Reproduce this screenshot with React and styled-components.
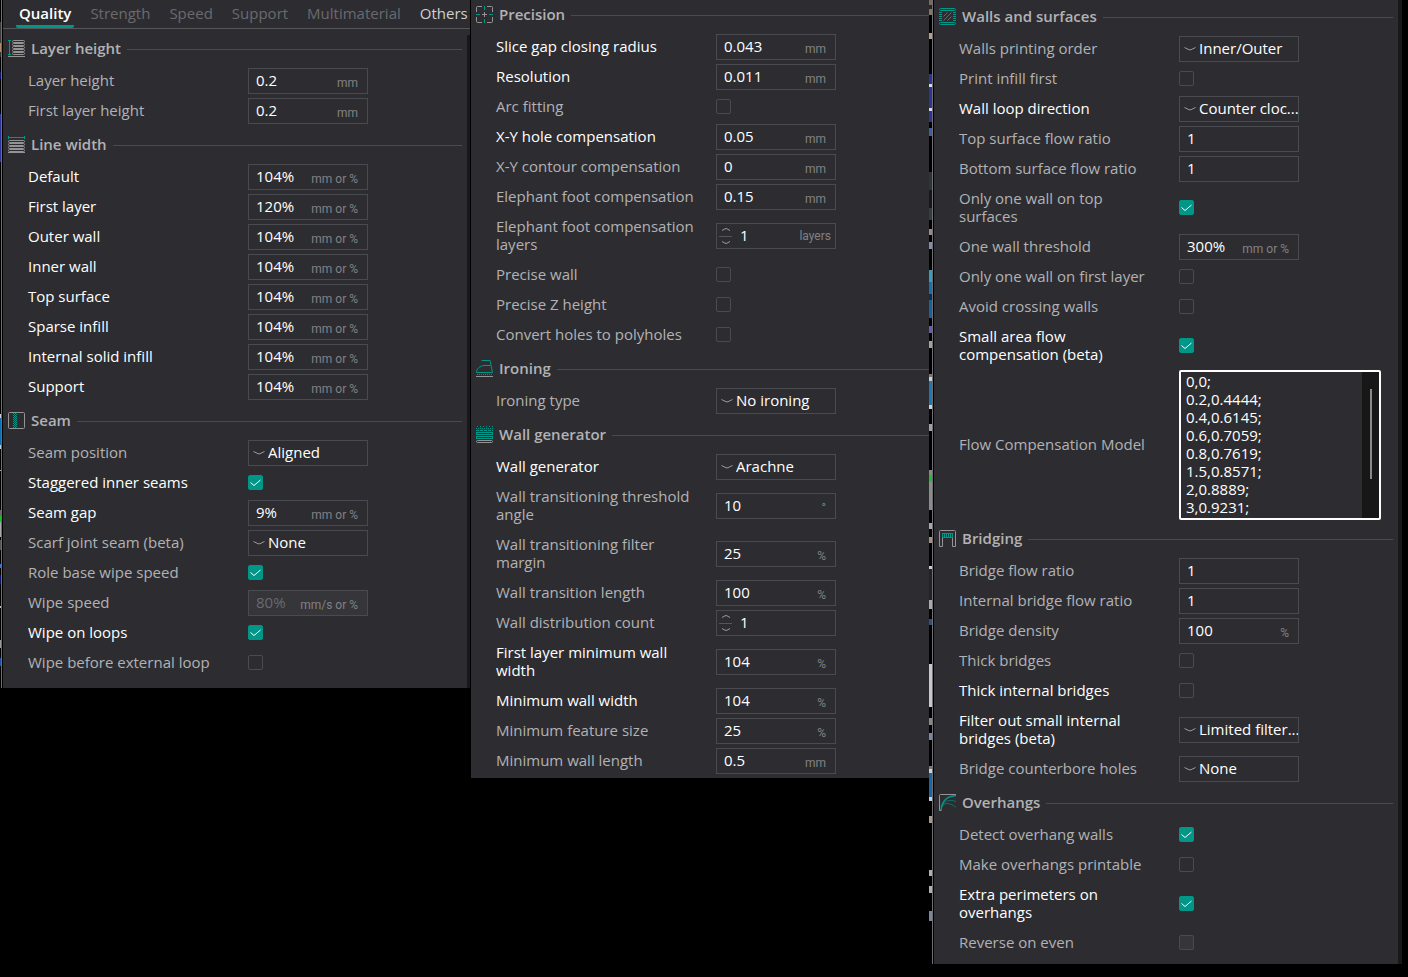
import React, { useId } from "react";
import styled, { createGlobalStyle, css } from "styled-components";

const c = {
  panel: "#2d2d31",
  line: "#4a4a51",
  label: "#b2b2b5",
  strong: "#ffffff",
  unit: "#818183",
  faint: "#6a6a6e",
  teal: "#009688",
  track: "#18181a",
  icon: "#949494",
};

const Global = createGlobalStyle`
  * { box-sizing: border-box; }
  body { margin: 0; background: #000; }
  body, button, input, select, textarea {
    font-family: "Open Sans", "Noto Sans", sans-serif;
    font-size: 15px;
    line-height: 18px;
  }
`;

const Page = styled.main`
  display: grid;
  grid-template-columns: 3px minmax(0, 467fr) 1px minmax(0, 458fr) 5px minmax(0, 468fr) 6px;
  align-items: start;
  overflow: hidden;
`;

const Gutter = styled.div`
  display: flex;
  align-self: stretch;
`;
const Backdrop = styled.div`
  flex: 1;
  background: linear-gradient(to bottom, ${(p) => p.$stops});
`;
const WindowEdge = styled.div`
  width: 1px;
  height: ${(p) => p.$height}px;
  margin-right: 1px;
  background: #707074;
`;
const Divider = styled.div``;

const Panel = styled.section`
  display: flex;
  flex-direction: column;
  background: ${c.panel};
  overflow: hidden;
`;
const TabBar = styled.nav`
  display: flex;
  gap: 13px;
  height: 29px;
  padding-left: 13px;
  border-bottom: 1px solid #55555a;
  overflow: hidden;
`;
const Tab = styled.button`
  flex: none;
  height: 28px;
  padding: 4px 3px 3px;
  border: 0;
  border-bottom: 3px solid ${(p) => (p.$active ? c.teal : "transparent")};
  border-radius: 2px;
  background: none;
  color: ${(p) => (p.$active ? "#fff" : p.$lit ? "#d0d0d2" : c.faint)};
  font-weight: ${(p) => (p.$active ? 600 : 400)};
`;
const Body = styled.div`
  display: flex;
  padding-top: ${(p) => p.$top}px;
`;
const Settings = styled.div`
  flex: 1;
  min-width: 0;
  padding-bottom: ${(p) => p.$bottom}px;
`;
const ScrollTrack = styled.div`
  width: ${(p) => p.$width}px;
  margin-top: ${(p) => p.$top}px;
  background: ${c.track};
`;

const GroupHeader = styled.header`
  display: flex;
  align-items: center;
  height: 31px;
  margin: ${(p) => p.$top}px ${(p) => p.$right}px 1px 5px;
  gap: 6px;
`;
const GroupTitle = styled.h2`
  margin: 0;
  padding-bottom: 3px;
  font-size: 15px;
  line-height: 18px;
  font-weight: 600;
  color: ${c.label};
  white-space: nowrap;
`;
const Rule = styled.span`
  flex: 1;
  height: 1px;
  background: ${c.line};
`;
const Icon = styled.svg.attrs({ width: 17, height: 17, viewBox: "0 0 17 17", fill: "none", "aria-hidden": true })`
  flex: none;
  margin-bottom: 2px;
`;

const Row = styled.div`
  display: grid;
  grid-template-columns: 220px minmax(0, 1fr);
  align-items: center;
  min-height: 30px;
  padding-left: 25px;
`;
const Label = styled.label`
  padding: 5px 18px 7px 0;
  color: ${(p) => (p.$strong ? c.strong : c.label)};
`;

const Box = styled.div`
  display: flex;
  align-items: center;
  width: 120px;
  height: 26px;
  border: 1px solid ${c.line};
  background: ${(p) => (p.$off ? "#35353a" : c.panel)};
`;
const TextInput = styled.input`
  flex: 1;
  min-width: 0;
  height: 24px;
  padding: 0 0 2px ${(p) => p.$inset}px;
  border: 0;
  outline: 0;
  background: none;
  color: #fff;
  &:disabled { color: ${c.faint}; }
`;
const Unit = styled.span`
  padding: ${(p) => (p.$spin ? "0 4px 0 0" : "3px 9px 0 0")};
  font-family: Roboto, sans-serif;
  font-size: 12px;
  color: ${c.unit};
  white-space: nowrap;
`;

const stacked = css`
  display: grid;
  align-items: center;
  > * { grid-area: 1 / 1; }
  > svg { pointer-events: none; }
`;
const SelectBox = styled.div`
  ${stacked}
  width: 120px;
  height: 26px;
  > svg { margin-left: 5px; }
`;
const Select = styled.select`
  width: 100%;
  min-width: 0;
  height: 26px;
  padding: 0 0 2px 19px;
  appearance: none;
  border: 1px solid ${c.line};
  border-radius: 0;
  outline: 0;
  background: ${c.panel};
  color: #fff;
  line-height: normal;
  white-space: nowrap;
`;
const CheckBox = styled.span`
  ${stacked}
  width: 15px;
  height: 15px;
  margin-bottom: 1px;
`;
const CheckInput = styled.input`
  width: 15px;
  height: 15px;
  margin: 0;
  appearance: none;
  border: 1px solid ${c.line};
  border-radius: 2px;
  &:checked { background: ${c.teal}; border-color: ${c.teal}; }
  &:disabled { background: #35353a; }
`;
const ModelBox = styled.div`
  display: flex;
  width: 202px;
  height: 150px;
  border: 2px solid #fff;
  border-radius: 2px;
`;
const ModelText = styled.textarea`
  flex: 1;
  min-width: 0;
  padding: 0 5px;
  border: 0;
  outline: 0;
  resize: none;
  overflow: hidden;
  background: ${c.panel};
  color: #fff;
`;
const ModelTrack = styled.div`
  width: 17px;
  padding: 17px 7px 0 8px;
  background: #171717;
`;
const ModelThumb = styled.div`
  height: 90px;
  background: #8a8a8a;
`;

const g = c.icon;
const t = c.teal;
const icons = {
  layer: (
    <Icon>
      <path d="M0 .5h3M1.5 .5v14M0 14.5h3" stroke={t} />
      {[0.5, 3.5, 6.5, 9.5, 12.5].map((y) => (
        <rect key={y} x="4.5" y={y} width="12" height="2" rx="1" stroke={g} />
      ))}
      <path d="M0 16.5h17" stroke={g} />
    </Icon>
  ),
  line: (
    <Icon>
      <path d="M.5 0v3M16.5 0v3M0 1.5h17" stroke={t} />
      {[4.5, 7.5, 10.5, 13.5].map((y) => (
        <rect key={y} x=".5" y={y} width="16" height="2" rx="1" stroke={g} />
      ))}
      <path d="M0 16.5h17" stroke={g} />
    </Icon>
  ),
  seam: (
    <Icon>
      <rect x=".5" y=".5" width="16" height="16" rx="1" stroke={g} />
      <path d="M5.5 1v15M7.5 1v15" stroke={t} strokeDasharray="1 1" />
      <path d="M6.5 2v14M8.5 2v14" stroke={t} strokeDasharray="1 1" />
    </Icon>
  ),
  precision: (
    <Icon>
      <path d="M6 .5H1.5a1 1 0 0 0-1 1V6M11 .5h4.500a1 1 0 0 1 1 1V6M.5 11v4.500a1 1 0 0 0 1 1H6M16.500 11v4.500a1 1 0 0 1-1 1H11M6 8.500h5M8.500 6v5" stroke={g} />
      <path d="M8.500 0v4M8.500 13v4M0 8.500h4M13 8.500h4" stroke={t} />
    </Icon>
  ),
  iron: (
    <Icon>
      <path d="M5.500 .5h8.500l2.500 12H.5C.5 8.500 4 6 8 5.500h6.500" stroke={t} />
      <path d="M1 14.500h16" stroke={t} strokeDasharray="1 1" />
      <path d="M0 16.500h17" stroke={g} />
    </Icon>
  ),
  wall: (
    <Icon>
      <path d="M1 .5h16" stroke={t} strokeDasharray="1 2" />
      <path d="M0 2.500h17" stroke={t} strokeDasharray="1 1" />
      <path d="M0 4.500h17" stroke={t} strokeDasharray="3 1" />
      <rect x=".5" y="6.500" width="16" height="2" stroke={t} />
      <rect x=".5" y="10.500" width="16" height="2" stroke={t} />
      <rect x=".5" y="14.500" width="16" height="2" rx="1" stroke={g} />
    </Icon>
  ),
  surfaces: (
    <Icon>
      <rect x=".5" y=".5" width="16" height="2" rx="1" stroke={t} />
      <rect x=".5" y="14.500" width="16" height="2" rx="1" stroke={t} />
      <path d="M1.500 4v10M15.500 4v10" stroke={t} strokeWidth="3" strokeDasharray="1 1" />
      <path d="M4.500 8.500l4-4M4.500 12.500l8-8M8.500 12.500l4-4" stroke={t} />
    </Icon>
  ),
  bridge: (
    <Icon>
      <path d="M.5 16.500v-15a1 1 0 0 1 1-1h14a1 1 0 0 1 1 1v15h-3V7.500h-10v9z" stroke={g} />
      <path d="M3 3.500h11M3 7.500h11M3.500 3v5M5.500 3v5M7.500 3v5M9.500 3v5M11.500 3v5M13.500 3v5" stroke={t} />
    </Icon>
  ),
  overhang: (
    <Icon>
      <path d="M17 .5H1.500a1 1 0 0 0-1 1v15h2" stroke={g} />
      <path d="M2 16C3 7 8 2 17 1.500" stroke={t} strokeWidth="1.500" />
      <path d="M3 13C5 7 10 5 17 7.500M4 11C8 8 13 10 17 13.500" stroke={t} opacity=".6" />
    </Icon>
  ),
};

const Chevron = () => (
  <svg width="12" height="6" viewBox="0 0 12 6" fill="none" aria-hidden="true">
    <path d="M.5 1.500l4.500 2.200q1 .4 2 0l4.500-2.200" stroke="#9a9a9d" />
  </svg>
);
const Tick = () => (
  <svg width="15" height="15" viewBox="0 0 15 15" fill="none" aria-hidden="true">
    <path d="M2.500 7.500l3.500 3 6.500-5.500" stroke="#fff" />
  </svg>
);
const SpinArrows = () => (
  <svg width="19" height="24" viewBox="0 0 19 24" fill="none" aria-hidden="true">
    <path d="M2 12.500h13" stroke="#55555a" />
    <path d="M5 6.500l3-1.700q1-.4 2 0l3 1.700M5 17.500l3 1.700q1 .4 2 0l3-1.700" stroke="#9a9a9d" />
  </svg>
);

/* Field builders: a leading "!" on a label marks a value changed from its preset. */
const text = (label, value, unit, off) => ({ kind: "text", label, value, unit, off });
const pick = (label, value) => ({ kind: "pick", label, value });
const check = (label, on, off) => ({ kind: "check", label, on, off });
const spin = (label, value, unit) => ({ kind: "spin", label, value, unit });
const model = (label, value) => ({ kind: "model", label, value });

const mmPct = "mm or %";
const quality = [
  { title: "Layer height", icon: "layer", fields: [text("Layer height", "0.2", "mm"), text("First layer height", "0.2", "mm")] },
  {
    title: "Line width",
    icon: "line",
    fields: [
      text("!Default", "104%", mmPct),
      text("!First layer", "120%", mmPct),
      text("!Outer wall", "104%", mmPct),
      text("!Inner wall", "104%", mmPct),
      text("!Top surface", "104%", mmPct),
      text("!Sparse infill", "104%", mmPct),
      text("!Internal solid infill", "104%", mmPct),
      text("!Support", "104%", mmPct),
    ],
  },
  {
    title: "Seam",
    icon: "seam",
    fields: [
      pick("Seam position", "Aligned"),
      check("!Staggered inner seams", true),
      text("!Seam gap", "9%", mmPct),
      pick("Scarf joint seam (beta)", "None"),
      check("Role base wipe speed", true),
      text("Wipe speed", "80%", "mm/s or %", true),
      check("!Wipe on loops", true),
      check("Wipe before external loop", false),
    ],
  },
];
const precision = [
  {
    title: "Precision",
    icon: "precision",
    fields: [
      text("!Slice gap closing radius", "0.043", "mm"),
      text("!Resolution", "0.011", "mm"),
      check("Arc fitting", false),
      text("!X-Y hole compensation", "0.05", "mm"),
      text("X-Y contour compensation", "0", "mm"),
      text("Elephant foot compensation", "0.15", "mm"),
      spin("Elephant foot compensation layers", "1", "layers"),
      check("Precise wall", false),
      check("Precise Z height", false),
      check("Convert holes to polyholes", false),
    ],
  },
  { title: "Ironing", icon: "iron", fields: [pick("Ironing type", "No ironing")] },
  {
    title: "Wall generator",
    icon: "wall",
    fields: [
      pick("!Wall generator", "Arachne"),
      text("Wall transitioning threshold angle", "10", "°"),
      text("Wall transitioning filter margin", "25", "%"),
      text("Wall transition length", "100", "%"),
      spin("Wall distribution count", "1"),
      text("!First layer minimum wall width", "104", "%"),
      text("!Minimum wall width", "104", "%"),
      text("Minimum feature size", "25", "%"),
      text("Minimum wall length", "0.5", "mm"),
    ],
  },
];
const walls = [
  {
    title: "Walls and surfaces",
    icon: "surfaces",
    fields: [
      pick("Walls printing order", "Inner/Outer"),
      check("Print infill first", false),
      pick("!Wall loop direction", "Counter cloc..."),
      text("Top surface flow ratio", "1"),
      text("Bottom surface flow ratio", "1"),
      check("Only one wall on top surfaces", true),
      text("One wall threshold", "300%", mmPct),
      check("Only one wall on first layer", false),
      check("Avoid crossing walls", false),
      check("!Small area flow compensation (beta)", true),
      model(
        "Flow Compensation Model",
        "0,0;\n0.2,0.4444;\n0.4,0.6145;\n0.6,0.7059;\n0.8,0.7619;\n1.5,0.8571;\n2,0.8889;\n3,0.9231;"
      ),
    ],
  },
  {
    title: "Bridging",
    icon: "bridge",
    fields: [
      text("Bridge flow ratio", "1"),
      text("Internal bridge flow ratio", "1"),
      text("Bridge density", "100", "%"),
      check("Thick bridges", false),
      check("!Thick internal bridges", false),
      pick("!Filter out small internal bridges (beta)", "Limited filter..."),
      pick("Bridge counterbore holes", "None"),
    ],
  },
  {
    title: "Overhangs",
    icon: "overhang",
    fields: [
      check("Detect overhang walls", true),
      check("Make overhangs printable", false),
      check("!Extra perimeters on overhangs", true),
      check("Reverse on even", false, true),
    ],
  },
];

function Control({ field, id }) {
  const { kind, value, unit, on, off } = field;
  if (kind === "pick")
    return (
      <SelectBox>
        <Select id={id} defaultValue={value}>
          <option>{value}</option>
        </Select>
        <Chevron />
      </SelectBox>
    );
  if (kind === "check")
    return (
      <CheckBox>
        <CheckInput id={id} type="checkbox" defaultChecked={on} disabled={off} />
        {on && <Tick />}
      </CheckBox>
    );
  if (kind === "model")
    return (
      <ModelBox>
        <ModelText id={id} defaultValue={value} spellCheck={false} />
        <ModelTrack>
          <ModelThumb />
        </ModelTrack>
      </ModelBox>
    );
  const isSpin = kind === "spin";
  return (
    <Box $off={off}>
      {isSpin && <SpinArrows />}
      <TextInput id={id} type="text" defaultValue={value} disabled={off} $inset={isSpin ? 4 : 7} />
      {unit && <Unit $spin={isSpin}>{unit}</Unit>}
    </Box>
  );
}

function Field({ field }) {
  const id = useId();
  const strong = field.label.startsWith("!");
  return (
    <Row>
      <Label htmlFor={id} $strong={strong}>
        {strong ? field.label.slice(1) : field.label}
      </Label>
      <Control field={field} id={id} />
    </Row>
  );
}

function Groups({ groups, firstTop, right, bottom }) {
  return (
    <Settings $bottom={bottom}>
      {groups.map((group, i) => (
        <React.Fragment key={group.title}>
          <GroupHeader $top={i ? 4 : firstTop} $right={right}>
            {icons[group.icon]}
            <GroupTitle>{group.title}</GroupTitle>
            <Rule />
          </GroupHeader>
          {group.fields.map((f) => (
            <Field key={f.label} field={f} />
          ))}
        </React.Fragment>
      ))}
    </Settings>
  );
}

/* Desktop visible between the windows: [from, to, colour] bands on black. */
const stops = (bands) => {
  let out = ["#000 0"];
  bands.forEach(([a, b, col]) => out.push(`#000 ${a}px`, `${col} ${a}px`, `${col} ${b}px`, `#000 ${b}px`));
  return out.join(", ");
};
const leftDesktop = [
  [22, 43, "#3a3a3a"], [43, 52, "#b58a60"], [52, 57, "#333"], [72, 79, "#10106a"], [114, 162, "#2c349a"],
  [414, 418, "#ccc"], [418, 445, "#0d6cb0"], [445, 449, "#ccc"], [470, 471, "#aaa"], [510, 516, "#666"],
  [516, 522, "#18c428"], [522, 537, "#aaa"], [540, 550, "#555"], [564, 568, "#3b6fd0"], [575, 584, "#10106a"],
  [606, 608, "#bbb"], [640, 648, "#999"], [658, 666, "#1a50a0"],
];
const midDesktop = [
  [0, 5, "#7a6a5c"], [5, 9, "#2a2622"], [9, 15, "#8a7460"], [33, 39, "#b8a080"], [74, 84, "#2c349a"], [84, 87, "#d8d8f0"],
  [87, 108, "#2c349a"], [108, 111, "#d8d8f0"], [111, 122, "#2c349a"], [128, 136, "#3a60a8"], [172, 190, "#2c3438"],
  [190, 208, "#15181a"], [208, 220, "#343c42"], [229, 235, "#9a8a80"], [242, 249, "#8090a8"], [270, 282, "#2aa3c0"],
  [282, 294, "#0e74b4"], [294, 300, "#0a2c50"], [300, 318, "#0e64a4"], [326, 333, "#6a5ab0"], [341, 348, "#a8a090"],
  [374, 377, "#777"], [377, 381, "#d0d0d0"], [381, 405, "#1878b8"], [405, 409, "#d0d0d0"], [424, 431, "#a0a0a8"],
  [470, 475, "#888"], [475, 482, "#18c428"], [482, 510, "#8c8c8c"], [523, 529, "#a8a8a8"], [537, 543, "#a89080"],
  [566, 569, "#ccc"], [569, 600, "#222"], [600, 609, "#aaa"], [619, 625, "#28508a"], [664, 707, "#c8c8c8"],
  [718, 725, "#888"], [733, 740, "#7888a8"], [766, 769, "#777"], [769, 773, "#d0d0d0"], [773, 797, "#1268ac"],
  [797, 801, "#d0d0d0"], [816, 823, "#a89888"], [870, 876, "#b0b0b0"], [886, 893, "#b0b0b0"], [911, 921, "#7888a0"],
];

export default function App() {
  return (
    <>
      <Global />
      <Page>
        <Gutter>
          <Backdrop $stops={stops(leftDesktop)} />
          <WindowEdge $height={688} />
        </Gutter>
        <Panel>
          <TabBar>
            <Tab type="button" $active>Quality</Tab>
            <Tab type="button">Strength</Tab>
            <Tab type="button">Speed</Tab>
            <Tab type="button">Support</Tab>
            <Tab type="button">Multimaterial</Tab>
            <Tab type="button" $lit>Others</Tab>
          </TabBar>
          <Body $top={1}>
            <Groups groups={quality} firstTop={4} right={5} bottom={10} />
            <ScrollTrack $width={3} $top={5} />
          </Body>
        </Panel>
        <Divider />
        <Panel>
          <Body $top={0}>
            <Groups groups={precision} firstTop={0} right={0} bottom={2} />
          </Body>
        </Panel>
        <Gutter>
          <Backdrop $stops={stops(midDesktop)} />
          <WindowEdge $height={964} />
        </Gutter>
        <Panel>
          <Body $top={0}>
            <Groups groups={walls} firstTop={2} right={5} bottom={6} />
            <ScrollTrack $width={4} $top={0} />
          </Body>
        </Panel>
      </Page>
    </>
  );
}
